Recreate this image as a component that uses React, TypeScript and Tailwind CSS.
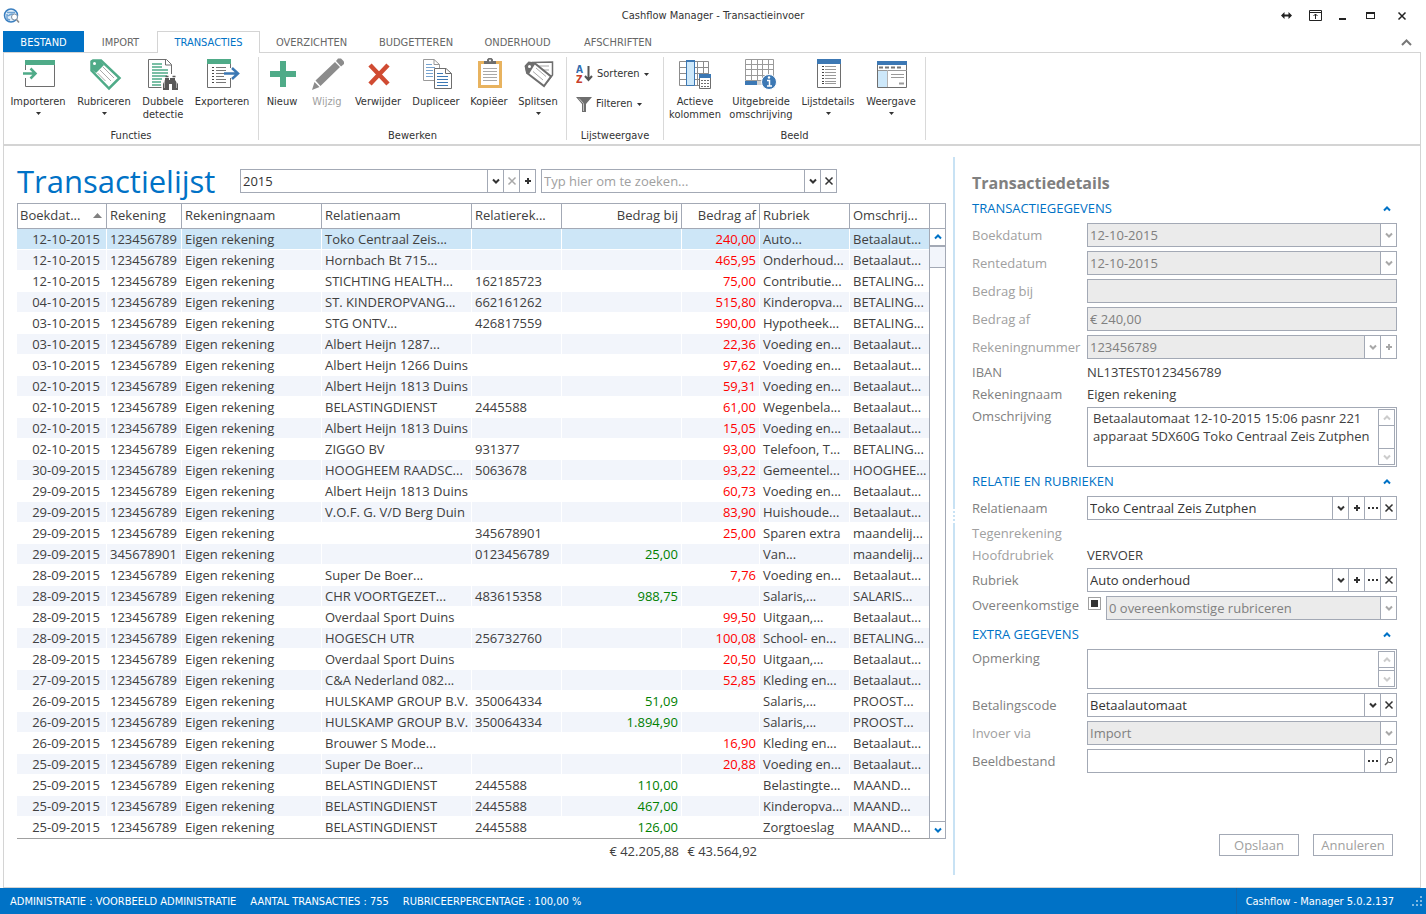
import type { ReactNode } from 'react';

type Tone = 'dark' | 'muted' | 'blue';

const tones: Record<Tone, string> = {
  dark: 'text-[#333333]',
  muted: 'text-[#a8a8a8]',
  blue: 'text-[#0072c6]',
};

const GREEN = '#4fab88';
const BLUE = '#3c78b4';
const GRAY = '#6e6e6e';

/* ---------- small glyphs ---------- */

const glyphs = {
  down: <path d="M2 3.5 5 6.5 8 3.5" fill="none" stroke="currentColor" strokeWidth="2" />,
  up: <path d="M2 6.5 5 3.5 8 6.5" fill="none" stroke="currentColor" strokeWidth="2" />,
  cross: <path d="M1.5 1.5 8.5 8.5M8.5 1.5 1.5 8.5" fill="none" stroke="currentColor" strokeWidth="1.5" />,
  plus: <path d="M2 5h6M5 2v6" fill="none" stroke="currentColor" strokeWidth="2" />,
  dots: <path d="M0 4h2v2H0zM4 4h2v2H4zM8 4h2v2H8z" fill="currentColor" />,
  search: (
    <g fill="none" stroke="#666">
      <circle cx="6" cy="4" r="2.7" />
      <path d="M4 6 1 9" strokeWidth="1.5" />
    </g>
  ),
};

type GlyphName = keyof typeof glyphs;

function Glyph({ name }: { name: GlyphName }) {
  return (
    <svg width="10" height="10" viewBox="0 0 10 10" className="shrink-0" aria-hidden="true">
      {glyphs[name]}
    </svg>
  );
}

function Caret() {
  return (
    <svg width="5" height="3" viewBox="0 0 5 3" className="shrink-0" aria-hidden="true">
      <path d="M0 0h5L2.5 3z" fill="#333" />
    </svg>
  );
}

/* ---------- ribbon icons ---------- */

function Icon({ children }: { children: ReactNode }) {
  return (
    <svg width="32" height="32" viewBox="0 0 32 32" fill="none" className="shrink-0 overflow-visible" aria-hidden="true">
      {children}
    </svg>
  );
}

const icons = {
  import: (
    <Icon>
      <path d="M3.500 12V4.500H32.500V28.500H3.500V20" stroke={GRAY} />
      <path d="M3 2h30v5H3z" fill={GREEN} />
      <path d="M1 15.500h12M8.500 10.500l5 5-5 5" stroke={GREEN} strokeWidth="2.500" />
    </Icon>
  ),
  tag: (
    <Icon>
      <path d="M3.500 3.500 5 2.500h8L31.500 20 21 30.500 3.500 12.500z" fill="#fff" stroke={GREEN} strokeWidth="2.500" />
      <path d="M3 2.500h9L16 7 8 15 3 11z" fill={GREEN} />
      <circle cx="6.500" cy="5.500" r="1.500" fill="#fff" />
      <path d="m15 9 11 11M12 12l11 11M9.500 15l8 8" stroke="#a8a8a8" />
    </Icon>
  ),
  duplicates: (
    <Icon>
      <path d="M24.500 16V6.500L19.500 1.500H1.500v28h13" stroke={GRAY} />
      <path d="M18.500 1v6h6" stroke={GRAY} />
      <path d="M5 6h10M5 9h10M5 12h16M5 15h16M5 18h15M5 21h10M5 24h9M5 27h9" stroke={GREEN} strokeWidth="1.500" />
      <path d="M18 20h4v2h1v-2h5v2l3 4v6h-6v-6h-3v6h-6v-6l2-4z" fill="#585858" />
      <path d="M18.500 18.500h3M25.500 18.500h3" stroke="#585858" strokeWidth="1.500" />
      <path d="M17.500 23v7M29.500 23v7" stroke="#fff" strokeWidth="0.500" />
    </Icon>
  ),
  export: (
    <Icon>
      <path d="M24.500 10V3.500H1.500v26h23V20" stroke={GRAY} />
      <path d="M1 1h24v5H1z" fill={GREEN} />
      <path d="M6 9.500h2M6 12.500h2M6 15.500h2M6 18.500h2M6 21.500h2M6 24.500h2" stroke="#444" />
      <path d="M10 9.500h10M10 12.500h10M10 15.500h8M10 18.500h8M10 21.500h10M10 24.500h10" stroke="#777" />
      <path d="M18 15.500h13M26 10l6 5.500-6 5.500" stroke={BLUE} strokeWidth="2.500" />
    </Icon>
  ),
  add: (
    <Icon>
      <path d="M4 13h10V3h6v10h10v6H20v10h-6V19H4z" fill={GREEN} />
    </Icon>
  ),
  edit: (
    <Icon>
      <path d="M1 32 3.500 24l5 5zM4.500 22.500 24 4l5 5L9.500 28z" fill="#8c8c8c" />
      <path d="m25 3 2-2.500h3l3 3V6l-3 2.500z" fill="#8c8c8c" />
    </Icon>
  ),
  remove: (
    <Icon>
      <path d="M8 7 26 26M26 7 8 26" stroke="#d04b32" strokeWidth="4.500" />
    </Icon>
  ),
  duplicate: (
    <Icon>
      <path d="M14 22.500H3.500v-21H14l5.500 5V10M14 1.500v5h5.500" stroke="#9a9a9a" />
      <path d="M6 6.500h6M6 9.500h9M6 12.500h7M6 15.500h7M6 18.500h7" stroke="#76a3d0" />
      <path d="M14.500 10.500H26l5.500 5v15h-17z" fill="#fff" stroke={GRAY} />
      <path d="M25.500 10.500v5h6" stroke={GRAY} />
      <path d="M17 15.500h6M17 18.500h11M17 21.500h11M17 24.500h11M17 27.500h11" stroke={BLUE} />
    </Icon>
  ),
  clipboard: (
    <Icon>
      <path d="M6.500 4.500h21v24h-21z" fill="#fff" stroke="#e8b35f" strokeWidth="3" />
      <path d="M11 6V3h3V1.500L15.500 0h3L20 1.500V3h3v3z" fill={GRAY} />
      <circle cx="17" cy="2.500" r="1" fill="#fff" />
      <path d="M10 10.500h14M10 13.500h14M10 16.500h14M10 19.500h14M10 22.500h14" stroke="#a8a8a8" />
    </Icon>
  ),
  split: (
    <Icon>
      <path d="m10 4.500 20.500-.500v13L25 24" fill="#fff" stroke={GRAY} strokeWidth="1.500" />
      <path d="M14 8h13M19 12h8" stroke="#a8a8a8" />
      <path d="m4 8 3-3 6 .500 16 13-7 9.500L5 15z" fill="#fff" stroke={GRAY} strokeWidth="2" />
      <path d="m2.500 8 4-4.500 7.500 1L7 16l-3-2z" fill={GRAY} />
      <circle cx="7.500" cy="8.500" r="1.500" fill="#fff" />
      <path d="m14 10 10 8.500M11 13.500l10 8.500" stroke="#a8a8a8" />
    </Icon>
  ),
  columns: (
    <Icon>
      <path d="M.500 3.500h29v24H.500zM.500 9.500h29M.500 15.500h29M.500 21.500h29M18.500 3v24M24.500 3v24" stroke="#8c8c8c" />
      <path d="M7.500 3.500h8v24h-8z" fill="#cde8fa" stroke={BLUE} />
      <path d="M7 2h9v2H7z" fill={BLUE} />
      <path d="M20.500 17.500h11v13h-11z" fill="#fff" stroke={GRAY} />
      <path d="M20 16h12v4H20z" fill={BLUE} />
      <path d="M22 22.500h8M22 25.500h8M22 28.500h8" stroke={GRAY} strokeDasharray="2 1" />
    </Icon>
  ),
  info: (
    <Icon>
      <path d="M.500 1.500h28v21H.500zM.500 6.500h28M.500 11.500h28M.500 17.500h28M6.500 1v22M12.500 1v22M17.500 1v22M23.500 1v22" stroke="#9a9a9a" />
      <path d="M0 23h12v4H0z" fill={BLUE} />
      <path d="M12 23h6v4h-6z" fill="#d4d4d4" />
      <circle cx="24" cy="24" r="7.500" fill={BLUE} stroke="#fff" />
      <path d="M22 22.500h2.500V28M22 28h5" stroke="#fff" strokeWidth="1.500" />
      <circle cx="24" cy="19.500" r="1.200" fill="#fff" />
    </Icon>
  ),
  list: (
    <Icon>
      <path d="M5.500 3.500h23v26h-23z" stroke={GRAY} />
      <path d="M5 1h24v5H5z" fill={BLUE} />
      <path d="M10 8.500h2M10 11.500h2M10 14.500h2M10 17.500h2M10 20.500h2M10 23.500h2M10 25.500h2" stroke="#444" />
      <path d="M13 8.500h11M13 11.500h11M13 14.500h11M13 17.500h11M13 20.500h11M13 23.500h11M13 25.500h11" stroke="#999" />
    </Icon>
  ),
  view: (
    <Icon>
      <path d="M2.500 4.500h29v25h-29z" stroke={GRAY} />
      <path d="M2 3h30v4H2z" fill={BLUE} />
      <path d="M4 9.500h4M10 9.500h4M16 9.500h4M22 9.500h4" stroke="#777" strokeWidth="2" />
      <path d="M3 13h9v16H3z" fill="#cde8fa" />
      <path d="M3 12.500h29M16 16.500h13M16 19.500h13" stroke="#9a9a9a" />
      <path d="M24 25.500h5" stroke="#9a9a9a" strokeWidth="2" />
      <path d="M12.500 12v17" stroke="#b4b4b4" />
    </Icon>
  ),
};

/* ---------- data ---------- */

const tabs = [
  { label: 'IMPORT', width: 'w-[73px]' },
  { label: 'TRANSACTIES', width: 'w-[103px]', active: true },
  { label: 'OVERZICHTEN', width: 'w-[103px]' },
  { label: 'BUDGETTEREN', width: 'w-[106px]' },
  { label: 'ONDERHOUD', width: 'w-[97px]' },
  { label: 'AFSCHRIFTEN', width: 'w-[104px]' },
];

type RibbonItem = { icon: keyof typeof icons; lines: string[]; width: string; menu?: boolean; disabled?: boolean };

const functies: RibbonItem[] = [
  { icon: 'import', lines: ['Importeren'], width: 'w-[68px]', menu: true },
  { icon: 'tag', lines: ['Rubriceren'], width: 'w-[64px]', menu: true },
  { icon: 'duplicates', lines: ['Dubbele', 'detectie'], width: 'w-[54px]' },
  { icon: 'export', lines: ['Exporteren'], width: 'w-[64px]' },
];

const bewerken: RibbonItem[] = [
  { icon: 'add', lines: ['Nieuw'], width: 'w-[44px]' },
  { icon: 'edit', lines: ['Wijzig'], width: 'w-[46px]', disabled: true },
  { icon: 'remove', lines: ['Verwijder'], width: 'w-[56px]' },
  { icon: 'duplicate', lines: ['Dupliceer'], width: 'w-[60px]' },
  { icon: 'clipboard', lines: ['Kopiëer'], width: 'w-[46px]' },
  { icon: 'split', lines: ['Splitsen'], width: 'w-[52px]', menu: true },
];

const beeld: RibbonItem[] = [
  { icon: 'columns', lines: ['Actieve', 'kolommen'], width: 'w-[58px]' },
  { icon: 'info', lines: ['Uitgebreide', 'omschrijving'], width: 'w-[74px]' },
  { icon: 'list', lines: ['Lijstdetails'], width: 'w-[60px]', menu: true },
  { icon: 'view', lines: ['Weergave'], width: 'w-[66px]', menu: true },
];

const columns = [
  { label: 'Boekdat...', width: 'w-[90px]', sorted: true },
  { label: 'Rekening', width: 'w-[75px]' },
  { label: 'Rekeningnaam', width: 'w-[140px]' },
  { label: 'Relatienaam', width: 'w-[150px]' },
  { label: 'Relatierek...', width: 'w-[90px]' },
  { label: 'Bedrag bij', width: 'w-[120px]', right: true },
  { label: 'Bedrag af', width: 'w-[78px]', right: true },
  { label: 'Rubriek', width: 'w-[90px]' },
  { label: 'Omschrij...', width: '' },
];

// datum, rekening, relatienaam, relatierekening, bij, af, rubriek, omschrijving
const rows = [
  ['12-10-2015', '123456789', 'Toko Centraal Zeis...', '', '', '240,00', 'Auto...', 'Betaalaut...'],
  ['12-10-2015', '123456789', 'Hornbach Bt 715...', '', '', '465,95', 'Onderhoud...', 'Betaalaut...'],
  ['12-10-2015', '123456789', 'STICHTING HEALTH...', '162185723', '', '75,00', 'Contributie...', 'BETALING...'],
  ['04-10-2015', '123456789', 'ST. KINDEROPVANG...', '662161262', '', '515,80', 'Kinderopva...', 'BETALING...'],
  ['03-10-2015', '123456789', 'STG ONTV...', '426817559', '', '590,00', 'Hypotheek...', 'BETALING...'],
  ['03-10-2015', '123456789', 'Albert Heijn 1287...', '', '', '22,36', 'Voeding en...', 'Betaalaut...'],
  ['03-10-2015', '123456789', 'Albert Heijn 1266 Duins', '', '', '97,62', 'Voeding en...', 'Betaalaut...'],
  ['02-10-2015', '123456789', 'Albert Heijn 1813 Duins', '', '', '59,31', 'Voeding en...', 'Betaalaut...'],
  ['02-10-2015', '123456789', 'BELASTINGDIENST', '2445588', '', '61,00', 'Wegenbela...', 'Betaalaut...'],
  ['02-10-2015', '123456789', 'Albert Heijn 1813 Duins', '', '', '15,05', 'Voeding en...', 'Betaalaut...'],
  ['02-10-2015', '123456789', 'ZIGGO BV', '931377', '', '93,00', 'Telefoon, T...', 'BETALING...'],
  ['30-09-2015', '123456789', 'HOOGHEEM RAADSC...', '5063678', '', '93,22', 'Gemeentel...', 'HOOGHEE...'],
  ['29-09-2015', '123456789', 'Albert Heijn 1813 Duins', '', '', '60,73', 'Voeding en...', 'Betaalaut...'],
  ['29-09-2015', '123456789', 'V.O.F. G. V/D Berg Duin', '', '', '83,90', 'Huishoude...', 'Betaalaut...'],
  ['29-09-2015', '123456789', '', '345678901', '', '25,00', 'Sparen extra', 'maandelij...'],
  ['29-09-2015', '345678901', '', '0123456789', '25,00', '', 'Van...', 'maandelij...'],
  ['28-09-2015', '123456789', 'Super De Boer...', '', '', '7,76', 'Voeding en...', 'Betaalaut...'],
  ['28-09-2015', '123456789', 'CHR VOORTGEZET...', '483615358', '988,75', '', 'Salaris,...', 'SALARIS...'],
  ['28-09-2015', '123456789', 'Overdaal Sport Duins', '', '', '99,50', 'Uitgaan,...', 'Betaalaut...'],
  ['28-09-2015', '123456789', 'HOGESCH UTR', '256732760', '', '100,08', 'School- en...', 'BETALING...'],
  ['28-09-2015', '123456789', 'Overdaal Sport Duins', '', '', '20,50', 'Uitgaan,...', 'Betaalaut...'],
  ['27-09-2015', '123456789', 'C&A Nederland 082...', '', '', '52,85', 'Kleding en...', 'Betaalaut...'],
  ['26-09-2015', '123456789', 'HULSKAMP GROUP B.V.', '350064334', '51,09', '', 'Salaris,...', 'PROOST...'],
  ['26-09-2015', '123456789', 'HULSKAMP GROUP B.V.', '350064334', '1.894,90', '', 'Salaris,...', 'PROOST...'],
  ['26-09-2015', '123456789', 'Brouwer S Mode...', '', '', '16,90', 'Kleding en...', 'Betaalaut...'],
  ['25-09-2015', '123456789', 'Super De Boer...', '', '', '20,88', 'Voeding en...', 'Betaalaut...'],
  ['25-09-2015', '123456789', 'BELASTINGDIENST', '2445588', '110,00', '', 'Belastingte...', 'MAAND...'],
  ['25-09-2015', '123456789', 'BELASTINGDIENST', '2445588', '467,00', '', 'Kinderopva...', 'MAAND...'],
  ['25-09-2015', '123456789', 'BELASTINGDIENST', '2445588', '126,00', '', 'Zorgtoeslag', 'MAAND...'],
];

/* ---------- window chrome ---------- */

function AppLogo() {
  return (
    <svg width="18" height="16" viewBox="0 0 18 16" fill="none" aria-hidden="true">
      <circle cx="8" cy="7.500" r="6.500" fill="#e4f0fa" stroke="#3a7fc0" strokeWidth="1.500" />
      <path d="M4 4.500h8M4 6v5l3 1M5 8c2-2 5-2 7-1" stroke="#6fa3d3" strokeWidth="1.500" />
      <circle cx="11.500" cy="9" r="3" fill="#fff" stroke="#7d8fa3" />
      <path d="m13.500 11.500 2.500 3" stroke="#8a8a8a" strokeWidth="1.500" />
    </svg>
  );
}

function TitleBar() {
  const button = 'flex h-5 items-center justify-center text-[#222222]';
  return (
    <header className="grid h-[31px] grid-cols-[1fr_auto_1fr] items-center">
      <div className="pl-[3px]">
        <AppLogo />
      </div>
      <h1 className="pt-[2px] text-[11px]">Cashflow Manager - Transactieinvoer</h1>
      <div className="flex justify-end pr-2">
        <button className={`${button} w-7`} aria-label="Breedte">
          <svg width="11" height="7" viewBox="0 0 11 7">
            <path d="M0 3.500 3.500 0v2.500h4V0L11 3.500 7.500 7V4.500h-4V7z" fill="currentColor" />
          </svg>
        </button>
        <button className={`${button} w-[30px]`} aria-label="Lint weergeven">
          <svg width="13" height="11" viewBox="0 0 13 11" fill="none" stroke="currentColor">
            <path d="M.500.500h12v10H.500zM.500 2.500h12M6.500 9V4M4.500 6l2-2 2 2" />
          </svg>
        </button>
        <button className={`${button} w-6`} aria-label="Minimaliseren">
          <svg width="7" height="8" viewBox="0 0 7 8">
            <path d="M0 6h7v2H0z" fill="currentColor" />
          </svg>
        </button>
        <button className={`${button} w-8`} aria-label="Maximaliseren">
          <svg width="9" height="7" viewBox="0 0 9 7">
            <path d="M0 0h9v7H0zM1 2v4h7V2z" fill="currentColor" fillRule="evenodd" />
          </svg>
        </button>
        <button className={`${button} w-8`} aria-label="Sluiten">
          <Glyph name="cross" />
        </button>
      </div>
    </header>
  );
}

function TabBar() {
  return (
    <nav className="flex h-[21px] items-start pr-[14px] pl-[3px] text-[11px]">
      <button className="h-[22px] w-[81px] shrink-0 bg-[#0072c6] pt-[2px] text-white">BESTAND</button>
      {tabs.map((tab) =>
        tab.active ? (
          <button
            key={tab.label}
            className={`z-10 h-[22px] shrink-0 border border-b-0 border-[#d4d4d4] bg-white pt-[2px] text-[#0072c6] ${tab.width}`}
          >
            {tab.label}
          </button>
        ) : (
          <button key={tab.label} className={`h-[22px] shrink-0 pt-[3px] text-[#666666] ${tab.width}`}>
            {tab.label}
          </button>
        ),
      )}
      <button className="ml-auto flex h-[22px] items-center text-[#777777]" aria-label="Lint inklappen">
        <svg width="11" height="7" viewBox="0 0 11 7" fill="none">
          <path d="M1 6 5.500 1.500 10 6" stroke="currentColor" strokeWidth="2" />
        </svg>
      </button>
    </nav>
  );
}

function RibbonButton({ item }: { item: RibbonItem }) {
  return (
    <button
      className={`flex shrink-0 flex-col items-center whitespace-nowrap ${item.width} ${item.disabled ? 'text-[#a0a0a0]' : ''}`}
      disabled={item.disabled}
    >
      {icons[item.icon]}
      <span className="mt-[5px] flex flex-col leading-[13px]">
        {item.lines.map((line) => (
          <span key={line}>{line}</span>
        ))}
      </span>
      {item.menu && (
        <span className="mt-1">
          <Caret />
        </span>
      )}
    </button>
  );
}

function RibbonGroup({ title, children }: { title: string; children: ReactNode }) {
  return (
    <section className="mt-1 flex h-[83px] flex-col border-r border-[#d9d9d9]">
      <div className="flex flex-1 items-start pt-px">{children}</div>
      <h2 className="text-center leading-2">{title}</h2>
    </section>
  );
}

function Ribbon() {
  return (
    <div className="mr-[5px] ml-[3px] flex h-[94px] border border-b-2 border-[#d4d4d4] text-[11px]">
      <RibbonGroup title="Functies">
        {functies.map((item) => <RibbonButton key={item.icon} item={item} />)}
        <span className="w-1" />
      </RibbonGroup>
      <RibbonGroup title="Bewerken">
        <span className="w-px" />
        {bewerken.map((item) => <RibbonButton key={item.icon} item={item} />)}
        <span className="w-[2px]" />
      </RibbonGroup>
      <RibbonGroup title="Lijstweergave">
        <div className="flex w-[96px] flex-col pt-px pl-[9px]">
          <button className="flex h-[30px] items-center gap-1">
            <svg width="17" height="20" viewBox="0 0 17 20" aria-hidden="true">
              <text x="0" y="9" fontSize="10" fontWeight="bold" fill="#2f6eb0">A</text>
              <text x="0" y="19" fontSize="10" fontWeight="bold" fill="#c8402a">Z</text>
              <path d="M12.500 2v14M9 12l3.500 4 3.500-4" fill="none" stroke="#555" strokeWidth="2" />
            </svg>
            Sorteren
            <Caret />
          </button>
          <button className="flex h-[30px] items-center gap-1">
            <svg width="16" height="16" viewBox="0 0 16 16" aria-hidden="true">
              <path d="M0 1h16l-6 7v8H6V8z" fill={GRAY} />
              <path d="m3 2.500 4.500 5V15" fill="none" stroke="#c4c4c4" />
            </svg>
            Filteren
            <Caret />
          </button>
        </div>
      </RibbonGroup>
      <RibbonGroup title="Beeld">
        <span className="w-[2px]" />
        {beeld.map((item) => <RibbonButton key={item.icon} item={item} />)}
        <span className="w-px" />
      </RibbonGroup>
    </div>
  );
}

/* ---------- form parts ---------- */

function EditButton({ glyph, tone = 'dark', label }: { glyph: GlyphName; tone?: Tone; label: string }) {
  return (
    <button
      type="button"
      aria-label={label}
      className={`flex w-4 shrink-0 items-center justify-center border-l border-[#a3a9b5] bg-white ${tones[tone]}`}
    >
      <Glyph name={glyph} />
    </button>
  );
}

function Box({ disabled, children }: { disabled?: boolean; children: ReactNode }) {
  return (
    <div
      className={`flex h-6 min-w-0 flex-1 border border-[#a3a9b5] ${disabled ? 'bg-[#ebebeb] text-[#808080]' : 'bg-white text-[#333333]'}`}
    >
      {children}
    </div>
  );
}

const control = 'min-w-0 flex-1 appearance-none bg-transparent px-[2px] pt-[2px] outline-none placeholder:text-[#a0a0a0] disabled:opacity-100';

function Row({ id, label, muted, top, children }: { id: string; label: string; muted?: boolean; top?: boolean; children: ReactNode }) {
  return (
    <div className={`flex ${top ? 'items-start' : 'items-center'}`}>
      <label htmlFor={id} className={`w-[115px] shrink-0 leading-[22px] ${muted ? 'text-[#a0a0a0]' : 'text-[#808080]'}`}>
        {label}
      </label>
      <div className="flex min-w-0 flex-1 py-[2px]">{children}</div>
    </div>
  );
}

function TextRow({ label, value, muted }: { label: string; value?: string; muted?: boolean }) {
  return (
    <dl className="flex h-[22px] leading-[22px]">
      <dt className={`w-[115px] shrink-0 ${muted ? 'text-[#a0a0a0]' : 'text-[#808080]'}`}>{label}</dt>
      <dd>{value}</dd>
    </dl>
  );
}

function SectionTitle({ children }: { children: ReactNode }) {
  return (
    <div className="flex h-[25px] items-center justify-between pt-px pr-[5px] text-[#0072c6]">
      <h3>{children}</h3>
      <button type="button" aria-label="Inklappen">
        <Glyph name="up" />
      </button>
    </div>
  );
}

function MemoBox({ id, value, height }: { id: string; value?: string; height: string }) {
  const button = 'flex h-4 w-full items-center justify-center text-[#cccccc]';
  return (
    <div className={`flex flex-1 border border-[#a3a9b5] p-px ${height}`}>
      <textarea
        id={id}
        defaultValue={value}
        className="min-w-0 flex-1 resize-none overflow-hidden px-1 leading-[18px] whitespace-pre outline-none"
      />
      <div className="flex w-[17px] shrink-0 flex-col justify-between border border-[#a3a9b5]">
        <button type="button" aria-label="Omhoog" className={`${button} border-b border-[#a3a9b5]`}>
          <Glyph name="up" />
        </button>
        <button type="button" aria-label="Omlaag" className={`${button} border-t border-[#a3a9b5]`}>
          <Glyph name="down" />
        </button>
      </div>
    </div>
  );
}

/* ---------- transaction list ---------- */

function TransactionTable() {
  const cell = 'overflow-hidden border-r border-b border-white px-[3px] whitespace-nowrap';
  const total = 'h-[27px] border-t border-[#a0a0a0] pr-[3px] pb-[2px] text-right whitespace-nowrap';
  return (
    <div className="mt-[10px] flex">
      <table className="w-full min-w-0 flex-1 table-fixed border-separate border-spacing-0 leading-5">
        <colgroup>
          {columns.map((col) => <col key={col.label} className={col.width} />)}
        </colgroup>
        <thead>
          <tr>
            {columns.map((col) => (
              <th
                key={col.label}
                className={`h-[26px] border-y border-r border-[#a3a9b5] px-[3px] pb-[2px] font-normal whitespace-nowrap first:border-l first:pl-[2px] last:border-r-0 ${col.right ? 'text-right' : 'text-left'}`}
              >
                {col.sorted ? (
                  <span className="flex items-center justify-between pr-px">
                    {col.label}
                    <svg width="9" height="5" viewBox="0 0 9 5" aria-hidden="true">
                      <path d="M0 5 4.500 0 9 5z" fill="#808080" />
                    </svg>
                  </span>
                ) : (
                  col.label
                )}
              </th>
            ))}
          </tr>
        </thead>
        <tbody>
          {rows.map(([date, account, name, relAccount, plus, minus, category, description], i) => (
            <tr key={i} className={i === 0 ? 'bg-[#cde6f7]' : 'odd:bg-white even:bg-[#f2f5fb]'}>
              <td className={`${cell} h-[21px] pr-[6px] text-right`}>{date}</td>
              <td className={cell}>{account}</td>
              <td className={cell}>Eigen rekening</td>
              <td className={cell}>{name}</td>
              <td className={cell}>{relAccount}</td>
              <td className={`${cell} text-right text-[#008000]`}>{plus}</td>
              <td className={`${cell} text-right text-[#ff0000]`}>{minus}</td>
              <td className={cell}>{category}</td>
              <td className={`${cell} border-r-0`}>{description}</td>
            </tr>
          ))}
        </tbody>
        <tfoot>
          <tr>
            <td colSpan={6} className={total}>€ 42.205,88</td>
            <td className={total}>€ 43.564,92</td>
            <td colSpan={2} className={total} />
          </tr>
        </tfoot>
      </table>
      <div className="mb-[26px] flex w-[17px] shrink-0 flex-col border border-[#a3a9b5]">
        <div className="h-[25px] border-b border-[#a3a9b5]" />
        <button aria-label="Omhoog" className="flex h-[18px] items-center justify-center border-b-2 border-[#a3a9b5] text-[#0072c6]">
          <Glyph name="up" />
        </button>
        <div className="h-[21px] border-b border-[#a3a9b5] bg-[#f2f5fb]" />
        <button aria-label="Omlaag" className="mt-auto flex h-[17px] items-center justify-center border-t border-[#a3a9b5] text-[#0072c6]">
          <Glyph name="down" />
        </button>
      </div>
    </div>
  );
}

function TransactionList() {
  return (
    <section className="min-w-0 flex-1 pt-[23px]">
      <div className="flex h-6 items-center">
        <h2 className="w-[223px] shrink-0 text-[31px] leading-6 text-[#0072c6]">Transactielijst</h2>
        <div className="flex w-[296px]">
          <Box>
            <select aria-label="Jaar" className={control} defaultValue="2015">
              <option>2015</option>
            </select>
            <EditButton glyph="down" label="Openen" />
            <EditButton glyph="cross" tone="muted" label="Wissen" />
            <EditButton glyph="plus" label="Toevoegen" />
          </Box>
        </div>
        <div className="ml-[5px] flex w-[296px]">
          <Box>
            <input aria-label="Zoeken" className={control} placeholder="Typ hier om te zoeken..." />
            <EditButton glyph="down" label="Openen" />
            <EditButton glyph="cross" label="Wissen" />
          </Box>
        </div>
      </div>
      <TransactionTable />
    </section>
  );
}

/* ---------- details ---------- */

function SelectRow({ id, label, value, disabled, muted, children }: {
  id: string;
  label: string;
  value: string;
  disabled?: boolean;
  muted?: boolean;
  children?: ReactNode;
}) {
  return (
    <Row id={id} label={label} muted={muted}>
      <Box disabled={disabled}>
        <select id={id} className={control} disabled={disabled} defaultValue={value}>
          <option>{value}</option>
        </select>
        <EditButton glyph="down" tone={disabled ? 'muted' : 'dark'} label="Openen" />
        {children}
      </Box>
    </Row>
  );
}

function Details() {
  const action = 'h-[22px] w-20 border border-[#a3a9b5] pt-px text-[#a0a0a0]';
  return (
    <form className="flex w-[425px] shrink-0 flex-col pt-[25px]">
      <h2 className="text-base leading-[25px] font-bold text-[#808080]">Transactiedetails</h2>

      <SectionTitle>TRANSACTIEGEGEVENS</SectionTitle>
      <SelectRow id="boekdatum" label="Boekdatum" value="12-10-2015" disabled muted />
      <SelectRow id="rentedatum" label="Rentedatum" value="12-10-2015" disabled muted />
      <Row id="bij" label="Bedrag bij" muted>
        <Box disabled><input id="bij" className={control} disabled /></Box>
      </Row>
      <Row id="af" label="Bedrag af" muted>
        <Box disabled><input id="af" className={control} disabled defaultValue="€ 240,00" /></Box>
      </Row>
      <SelectRow id="rekeningnummer" label="Rekeningnummer" value="123456789" disabled muted>
        <EditButton glyph="plus" tone="muted" label="Toevoegen" />
      </SelectRow>
      <TextRow label="IBAN" value="NL13TEST0123456789" />
      <TextRow label="Rekeningnaam" value="Eigen rekening" />
      <Row id="omschrijving" label="Omschrijving" top>
        <MemoBox
          id="omschrijving"
          height="h-[60px]"
          value={'Betaalautomaat 12-10-2015 15:06 pasnr 221\napparaat 5DX60G Toko Centraal Zeis Zutphen'}
        />
      </Row>

      <SectionTitle>RELATIE EN RUBRIEKEN</SectionTitle>
      <SelectRow id="relatienaam" label="Relatienaam" value="Toko Centraal Zeis Zutphen">
        <EditButton glyph="plus" label="Toevoegen" />
        <EditButton glyph="dots" label="Bladeren" />
        <EditButton glyph="cross" label="Wissen" />
      </SelectRow>
      <TextRow label="Tegenrekening" muted />
      <TextRow label="Hoofdrubriek" value="VERVOER" muted />
      <SelectRow id="rubriek" label="Rubriek" value="Auto onderhoud">
        <EditButton glyph="plus" label="Toevoegen" />
        <EditButton glyph="dots" label="Bladeren" />
        <EditButton glyph="cross" label="Wissen" />
      </SelectRow>
      <Row id="overeenkomstige" label="Overeenkomstige" top>
        <input
          id="overeenkomstige"
          type="checkbox"
          defaultChecked
          className="mt-px mr-[5px] ml-px grid size-[13px] shrink-0 appearance-none place-content-center border border-[#a0a0a0] before:size-[7px] before:bg-[#333333] before:content-['']"
        />
        <Box disabled>
          <select aria-label="Overeenkomstige rubriceren" className={control} disabled>
            <option>0 overeenkomstige rubriceren</option>
          </select>
          <EditButton glyph="down" tone="muted" label="Openen" />
        </Box>
      </Row>

      <SectionTitle>EXTRA GEGEVENS</SectionTitle>
      <Row id="opmerking" label="Opmerking" top>
        <MemoBox id="opmerking" height="h-10" />
      </Row>
      <SelectRow id="betalingscode" label="Betalingscode" value="Betaalautomaat">
        <EditButton glyph="cross" label="Wissen" />
      </SelectRow>
      <SelectRow id="invoer" label="Invoer via" value="Import" disabled muted />
      <Row id="beeldbestand" label="Beeldbestand">
        <Box>
          <input id="beeldbestand" className={control} />
          <EditButton glyph="dots" label="Bladeren" />
          <EditButton glyph="search" label="Bekijken" />
        </Box>
      </Row>

      <div className="mt-auto mb-[31px] flex justify-end gap-[14px] pr-1">
        <button type="button" className={action}>Opslaan</button>
        <button type="button" className={action}>Annuleren</button>
      </div>
    </form>
  );
}

export default function App() {
  return (
    <div className="flex min-h-screen flex-col bg-white font-['DejaVu_Sans_Condensed','DejaVu_Sans',sans-serif] text-[#333333]">
      <TitleBar />
      <TabBar />
      <Ribbon />
      <main className="mr-[5px] ml-[3px] flex flex-1 border border-t-0 border-[#d4d4d4] pr-[23px] pl-[13px] font-['Open_Sans',sans-serif] text-[13px] text-[#404040]">
        <TransactionList />
        <div className="mt-[11px] mr-[17px] mb-3 ml-[7px] flex w-[2px] shrink-0 flex-col items-center justify-center gap-[2px] bg-[#c8e2f4]">
          <i className="size-[2px] bg-white" />
          <i className="size-[2px] bg-white" />
          <i className="size-[2px] bg-white" />
          <i className="size-[2px] bg-white" />
        </div>
        <Details />
      </main>
      <footer className="flex h-[26px] items-center bg-[#0072c6] pl-[10px] text-[11px] whitespace-nowrap text-white">
        <span className="pt-[3px]">ADMINISTRATIE : VOORBEELD ADMINISTRATIE</span>
        <span className="ml-[14px] pt-[3px]">AANTAL TRANSACTIES : 755</span>
        <span className="ml-[14px] pt-[3px]">RUBRICEERPERCENTAGE : 100,00 %</span>
        <span className="ml-auto flex h-full items-center border-l border-[#1565a8] pt-[3px] pr-[18px] pl-[9px]">Cashflow - Manager 5.0.2.137</span>
        <svg width="10" height="10" viewBox="0 0 10 10" className="mr-1" aria-hidden="true">
          <path d="M8 0h2v2H8zM4 4h2v2H4zM8 4h2v2H8zM0 8h2v2H0zM4 8h2v2H4zM8 8h2v2H8z" fill="#7fb8e2" />
        </svg>
      </footer>
    </div>
  );
}
